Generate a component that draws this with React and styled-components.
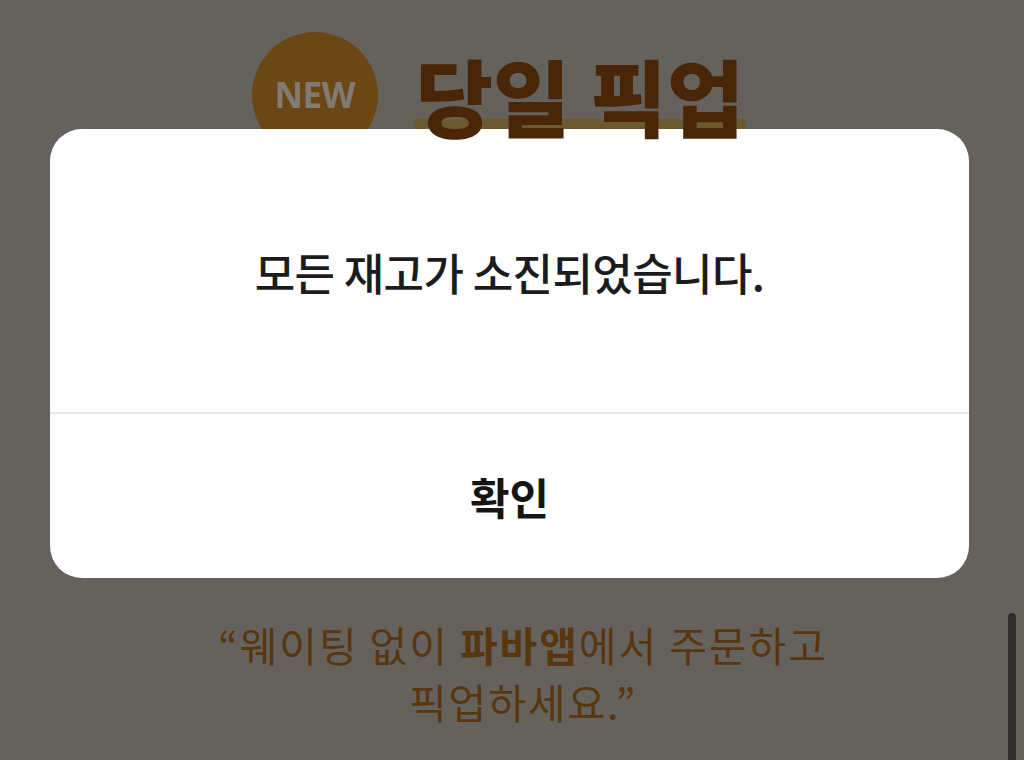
import React from "react";
import styled, { createGlobalStyle } from "styled-components";

const Global = createGlobalStyle`
  html, body { margin: 0; padding: 0; }
  body {
    width: 1024px;
    height: 760px;
    overflow: hidden;
    background: #65625d;
    font-family: "Noto Sans CJK KR", "Noto Sans", sans-serif;
  }
`;

const Page = styled.div`
  position: relative;
  width: 1024px;
  height: 760px;
  background: #65625d;
  overflow: hidden;
`;

const Header = styled.div`
  display: flex;
  align-items: center;
  justify-content: center;
  gap: 38px;
  padding: 32px 28px 0 0;
`;

const NewBadge = styled.div`
  width: 126px;
  height: 126px;
  border-radius: 50%;
  background: #6b4714;
  display: flex;
  align-items: center;
  justify-content: center;
  color: #817b73;
  font-family: "Open Sans", "Noto Sans", sans-serif;
  font-weight: 700;
  font-size: 35px;
  letter-spacing: -0.5px;
  padding-bottom: 2px;
  box-sizing: border-box;
`;

const TitleWrap = styled.div`
  position: relative;
`;

const Title = styled.h1`
  position: relative;
  margin: 0;
  font-size: 84px;
  font-weight: 900;
  color: #4a2608;
  line-height: 1;
  letter-spacing: 0;
  z-index: 1;
`;

const Underline = styled.div`
  position: absolute;
  left: -2px;
  right: -2px;
  bottom: 0;
  height: 18px;
  background: #6b5a30;
  z-index: 0;
`;

const Quote = styled.p`
  margin: 458px 0 0;
  text-align: center;
  font-size: 41px;
  line-height: 57px;
  color: #58360f;
  font-weight: 400;
  letter-spacing: 1.9px;
  padding-left: 22px;
  b { font-weight: 700; }
`;

const Scrollbar = styled.div`
  position: absolute;
  right: 8px;
  top: 613px;
  width: 8px;
  height: 170px;
  border-radius: 4px;
  background: #2f2d2a;
`;

const Overlay = styled.div`
  position: absolute;
  inset: 0;
  padding: 129px 55px 0 50px;
  box-sizing: border-box;
`;

const Dialog = styled.div`
  background: #ffffff;
  border-radius: 32px;
  height: 449px;
  display: flex;
  flex-direction: column;
  overflow: hidden;
`;

const Message = styled.div`
  height: 283px;
  display: flex;
  align-items: center;
  justify-content: center;
  font-size: 44px;
  font-weight: 500;
  color: #1c1c1c;
  letter-spacing: -0.6px;
  padding-top: 2px;
  box-sizing: border-box;
`;

const Divider = styled.div`
  height: 2px;
  background: #e8e8ea;
`;

const ConfirmButton = styled.button`
  flex: 1;
  border: none;
  background: transparent;
  font-family: "Noto Sans CJK KR", "Noto Sans", sans-serif;
  font-size: 43px;
  font-weight: 700;
  color: #151515;
  cursor: pointer;
  padding: 0;
`;

export default function App() {
  return (
    <>
      <Global />
      <Page>
        <Header>
          <NewBadge>NEW</NewBadge>
          <TitleWrap>
            <Underline />
            <Title>당일 픽업</Title>
          </TitleWrap>
        </Header>
        <Quote>
          “웨이팅 없이 <b>파바앱</b>에서 주문하고
          <br />
          픽업하세요.”
        </Quote>
        <Scrollbar />
        <Overlay>
          <Dialog role="alertdialog">
            <Message>모든 재고가 소진되었습니다.</Message>
            <Divider />
            <ConfirmButton>확인</ConfirmButton>
          </Dialog>
        </Overlay>
      </Page>
    </>
  );
}
